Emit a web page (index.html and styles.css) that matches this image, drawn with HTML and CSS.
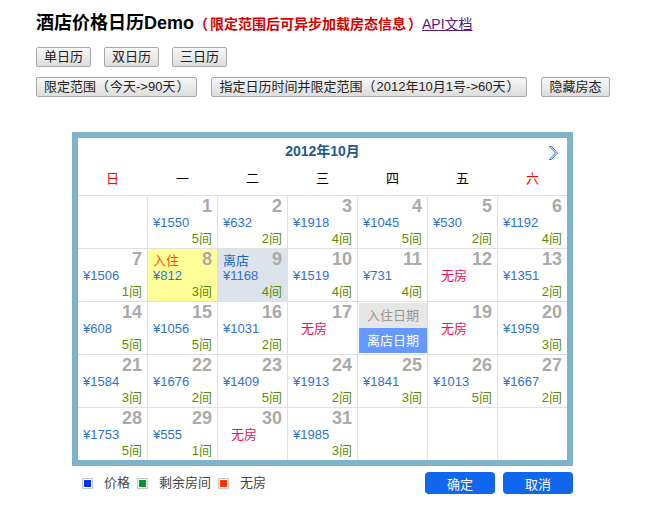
FILE: index.html
```html
<!DOCTYPE html>
<html lang="zh-CN">
<head>
<meta charset="utf-8">
<title>酒店价格日历Demo</title>
<link rel="stylesheet" href="styles.css">
</head>
<body>
<div class="page">
  <h1 class="title">酒店价格日历Demo<span class="note"><span class="pl">（</span>限定范围后可异步加载房态信息<span class="pr">）</span></span><a class="doc" href="#">API文档</a></h1>
  <div class="btn-row row1">
    <button class="btn">单日历</button>
    <button class="btn">双日历</button>
    <button class="btn">三日历</button>
  </div>
  <div class="btn-row row2">
    <button class="btn">限定范围<span class="pl">（</span>今天-&gt;90天<span class="pr">）</span></button>
    <button class="btn">指定日历时间并限定范围<span class="pl">（</span>2012年10月1号-&gt;60天<span class="pr">）</span></button>
    <button class="btn">隐藏房态</button>
  </div>

  <div class="cal-wrap">
    <div class="cal">
      <div class="cal-head">
        <span></span>
        <span class="month">2012年10月</span>
        <span class="next"><svg width="10" height="14" viewBox="0 0 10 14"><polygon points="0.5,0.5 2.5,0.5 8.5,7 2.5,13.5 0.5,13.5 6.5,7" fill="none" stroke="#2f72d2" stroke-width="1"/></svg></span>
      </div>
      <div class="weekdays">
        <span class="wk red">日</span><span class="wk">一</span><span class="wk">二</span><span class="wk">三</span><span class="wk">四</span><span class="wk">五</span><span class="wk red">六</span>
      </div>
      <div class="grid">
        <div class="cell"></div>
        <div class="cell"><div class="dl"><span></span><span class="day">1</span></div><div class="price">¥1550</div><div class="rooms">5间</div></div>
        <div class="cell"><div class="dl"><span></span><span class="day">2</span></div><div class="price">¥632</div><div class="rooms">2间</div></div>
        <div class="cell"><div class="dl"><span></span><span class="day">3</span></div><div class="price">¥1918</div><div class="rooms">4间</div></div>
        <div class="cell"><div class="dl"><span></span><span class="day">4</span></div><div class="price">¥1045</div><div class="rooms">5间</div></div>
        <div class="cell"><div class="dl"><span></span><span class="day">5</span></div><div class="price">¥530</div><div class="rooms">2间</div></div>
        <div class="cell"><div class="dl"><span></span><span class="day">6</span></div><div class="price">¥1192</div><div class="rooms">4间</div></div>

        <div class="cell"><div class="dl"><span></span><span class="day">7</span></div><div class="price">¥1506</div><div class="rooms">1间</div></div>
        <div class="cell checkin"><div class="dl"><span class="tag tag-in">入住</span><span class="day">8</span></div><div class="price">¥812</div><div class="rooms">3间</div></div>
        <div class="cell checkout"><div class="dl"><span class="tag tag-out">离店</span><span class="day">9</span></div><div class="price">¥1168</div><div class="rooms">4间</div></div>
        <div class="cell"><div class="dl"><span></span><span class="day">10</span></div><div class="price">¥1519</div><div class="rooms">4间</div></div>
        <div class="cell"><div class="dl"><span></span><span class="day">11</span></div><div class="price">¥731</div><div class="rooms">4间</div></div>
        <div class="cell"><div class="dl"><span></span><span class="day">12</span></div><div class="full">无房</div></div>
        <div class="cell"><div class="dl"><span></span><span class="day">13</span></div><div class="price">¥1351</div><div class="rooms">2间</div></div>

        <div class="cell"><div class="dl"><span></span><span class="day">14</span></div><div class="price">¥608</div><div class="rooms">5间</div></div>
        <div class="cell"><div class="dl"><span></span><span class="day">15</span></div><div class="price">¥1056</div><div class="rooms">5间</div></div>
        <div class="cell"><div class="dl"><span></span><span class="day">16</span></div><div class="price">¥1031</div><div class="rooms">2间</div></div>
        <div class="cell"><div class="dl"><span></span><span class="day">17</span></div><div class="full">无房</div></div>
        <div class="cell">
          <div class="menu"><div class="mi mi-in">入住日期</div><div class="mi mi-out">离店日期</div></div>
        </div>
        <div class="cell"><div class="dl"><span></span><span class="day">19</span></div><div class="full">无房</div></div>
        <div class="cell"><div class="dl"><span></span><span class="day">20</span></div><div class="price">¥1959</div><div class="rooms">3间</div></div>

        <div class="cell"><div class="dl"><span></span><span class="day">21</span></div><div class="price">¥1584</div><div class="rooms">3间</div></div>
        <div class="cell"><div class="dl"><span></span><span class="day">22</span></div><div class="price">¥1676</div><div class="rooms">2间</div></div>
        <div class="cell"><div class="dl"><span></span><span class="day">23</span></div><div class="price">¥1409</div><div class="rooms">5间</div></div>
        <div class="cell"><div class="dl"><span></span><span class="day">24</span></div><div class="price">¥1913</div><div class="rooms">2间</div></div>
        <div class="cell"><div class="dl"><span></span><span class="day">25</span></div><div class="price">¥1841</div><div class="rooms">3间</div></div>
        <div class="cell"><div class="dl"><span></span><span class="day">26</span></div><div class="price">¥1013</div><div class="rooms">5间</div></div>
        <div class="cell"><div class="dl"><span></span><span class="day">27</span></div><div class="price">¥1667</div><div class="rooms">2间</div></div>

        <div class="cell"><div class="dl"><span></span><span class="day">28</span></div><div class="price">¥1753</div><div class="rooms">5间</div></div>
        <div class="cell"><div class="dl"><span></span><span class="day">29</span></div><div class="price">¥555</div><div class="rooms">1间</div></div>
        <div class="cell"><div class="dl"><span></span><span class="day">30</span></div><div class="full">无房</div></div>
        <div class="cell"><div class="dl"><span></span><span class="day">31</span></div><div class="price">¥1985</div><div class="rooms">3间</div></div>
        <div class="cell"></div>
        <div class="cell"></div>
        <div class="cell"></div>
      </div>
    </div>
    <div class="cal-foot">
      <div class="legend">
        <span class="sw sw-price"></span><span class="lg">价格</span>
        <span class="sw sw-rooms"></span><span class="lg">剩余房间</span>
        <span class="sw sw-full"></span><span class="lg">无房</span>
      </div>
      <div class="actions">
        <button class="act">确定</button>
        <button class="act">取消</button>
      </div>
    </div>
  </div>
</div>
</body>
</html>
```
FILE: styles.css
```css
* { box-sizing: border-box; }
html, body { margin: 0; padding: 0; background: #fff; }
body {
  font-family: "Liberation Sans", "Noto Sans CJK SC", sans-serif;
  font-size: 13px;
  color: #000;
}
.page { padding: 12px 0 0 36px; }

.pl { margin-right: 1px; }
.pr { margin-left: 1px; }
.note .pl { margin-right: 2px; }
.note .pr { margin-left: 2px; }

.title {
  margin: 0;
  font-size: 18px;
  line-height: 22px;
  font-weight: bold;
  color: #000;
  white-space: nowrap;
}
.note {
  font-size: 14px;
  font-weight: bold;
  color: #d60000;
}
.doc {
  font-size: 14px;
  font-weight: normal;
  color: #551a8b;
  text-decoration: underline;
}

.btn-row { display: flex; gap: 13px; }
.row1 { margin-top: 12px; }
.row2 { margin-top: 10px; gap: 14px; }
.btn {
  font-family: "Liberation Sans", "Noto Sans CJK SC", sans-serif;
  font-size: 13px;
  line-height: 16px;
  height: 20px;
  padding: 1px 7px;
  border: 1px solid #a8a8a8;
  border-radius: 2px;
  background: linear-gradient(#f7f7f7, #dddddd);
  color: #222;
  white-space: nowrap;
}

.cal-wrap { margin: 35px 0 0 36px; width: 501px; }
.cal { border: 6px solid #7eb3c9; background: #fff; }
.cal-head {
  height: 26px;
  display: grid;
  grid-template-columns: 1fr auto 1fr;
  align-items: center;
}
.month {
  font-size: 14px;
  font-weight: bold;
  color: #1f5a8e;
  line-height: 26px;
}
.next {
  justify-self: end;
  margin-right: 8px;
  padding-top: 4px;
  display: flex;
}
.weekdays {
  display: grid;
  grid-template-columns: repeat(7, 69px);
  column-gap: 1px;
  height: 31px;
}
.wk { text-align: center; line-height: 30px; font-size: 13px; color: #000; }
.wk.red { color: #f00; }

.grid {
  display: grid;
  grid-template-columns: repeat(7, 69px);
  grid-auto-rows: 52px;
  gap: 1px;
  padding-top: 1px;
  background: #e0e0e0;
}
.cell { background: #fff; position: relative; padding-top: 1px; }
.cell.checkin { background: #ffff99; }
.cell.checkout { background: #dce3ea; }
.dl {
  display: flex;
  justify-content: space-between;
  align-items: baseline;
  height: 18px;
  line-height: 18px;
  padding: 0 5px;
}
.day { font-size: 18px; font-weight: bold; color: #aaa; }
.tag { font-size: 13px; }
.tag-in { color: #ff5500; }
.tag-out { color: #2266cc; }
.price { padding-left: 5px; line-height: 16px; color: #2f72d2; }
.rooms { text-align: right; padding-right: 5px; line-height: 16px; color: #5c8d00; }
.full { padding-left: 13px; line-height: 16px; color: #ee1155; }

.menu {
  position: absolute;
  top: 1px;
  left: 1px;
  width: 68px;
}
.mi { height: 25px; line-height: 25px; text-align: center; font-size: 13px; }
.mi-in { background: #e6e6e6; color: #999; }
.mi-out { background: #6699ff; color: #fff; }

.cal-foot {
  margin-top: 6px;
  height: 22px;
  display: flex;
  justify-content: space-between;
  align-items: center;
}
.legend {
  display: flex;
  align-items: center;
  padding-left: 10px;
  color: #444;
  font-size: 13px;
}
.sw {
  width: 11px;
  height: 11px;
  padding: 1px;
  border: 1px solid #c8c8c8;
  background-clip: content-box;
}
.sw-price { background-color: #0033ff; }
.sw-rooms { background-color: #009933; }
.sw-full { background-color: #ff3300; }
.lg { margin: 0 7px 0 11px; line-height: 16px; }
.actions { display: flex; gap: 8px; }
.act {
  width: 70px;
  height: 22px;
  border: none;
  border-radius: 4px;
  background: #1166ee;
  color: #fff;
  font-family: "Liberation Sans", "Noto Sans CJK SC", sans-serif;
  font-size: 13px;
  padding: 0;
}
```
